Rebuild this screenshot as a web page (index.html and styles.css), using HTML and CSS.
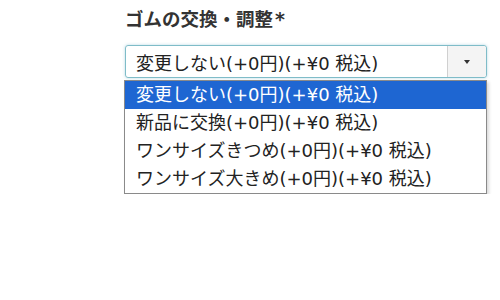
FILE: index.html
```html
<!DOCTYPE html>
<html lang="ja">
  <head>
    <meta charset="UTF-8" />
    <title>ゴムの交換・調整</title>
    <link rel="stylesheet" href="styles.css">
  </head>
  <body>
    <div class="form-group">
      <label class="field-label">ゴムの交換・調整<span class="req">*</span></label>
      <div class="select-wrap">
        <div class="select-box">
          <span class="select-value">変更しない(+0円)(+¥0 税込)</span>
          <span class="select-arrow"></span>
        </div>
        <ul class="option-list">
          <li class="option selected">変更しない(+0円)(+¥0 税込)</li>
          <li class="option">新品に交換(+0円)(+¥0 税込)</li>
          <li class="option">ワンサイズきつめ(+0円)(+¥0 税込)</li>
          <li class="option">ワンサイズ大きめ(+0円)(+¥0 税込)</li>
        </ul>
      </div>
    </div>
  </body>
</html>
```

FILE: styles.css
```css
body,
html {
  margin: 0;
  padding: 0;
  background: #ffffff;
  font-family: "DejaVu Sans", "Noto Sans CJK JP", sans-serif;
  color: #333333;
}

.form-group {
  padding: 5px 13px 0 125px;
}

/* Label */
.field-label {
  display: block;
  font-family: "Noto Sans CJK JP", sans-serif;
  font-size: 18.5px;
  font-weight: bold;
  line-height: 26px;
  margin-bottom: 13px;
}

.req {
  margin-left: 2px;
  font-family: "DejaVu Sans", sans-serif;
  font-size: 19px;
}

/* Closed select */
.select-box {
  height: 31px;
  border: 1px solid #7fbcc8;
  border-radius: 3px;
  display: flex;
  align-items: center;
  box-shadow: 0 0 3px rgba(102, 175, 200, 0.5);
}

.select-value {
  flex: 1;
  padding-left: 10px;
  font-size: 18px;
  color: #222222;
  white-space: nowrap;
}

.select-arrow {
  width: 38px;
  height: 100%;
  border-left: 1px solid #d0d0d0;
  background: #f4f4f4;
  border-radius: 0 3px 3px 0;
  position: relative;
}

.select-arrow::after {
  content: "";
  position: absolute;
  left: 16px;
  top: 14px;
  border-left: 3px solid transparent;
  border-right: 3px solid transparent;
  border-top: 4px solid #333333;
}

/* Open list */
.option-list {
  margin: 2px 0 0 -1px;
  padding: 0;
  list-style: none;
  background: #ffffff;
  border: 1px solid #8a8a8a;
  box-shadow: 2px 2px 3px rgba(0, 0, 0, 0.15);
}

.option {
  height: 28px;
  line-height: 28px;
  padding-left: 11px;
  font-size: 18px;
  color: #222222;
  white-space: nowrap;
}

.option.selected {
  background: #1e66d2;
  color: #ffffff;
}
```
